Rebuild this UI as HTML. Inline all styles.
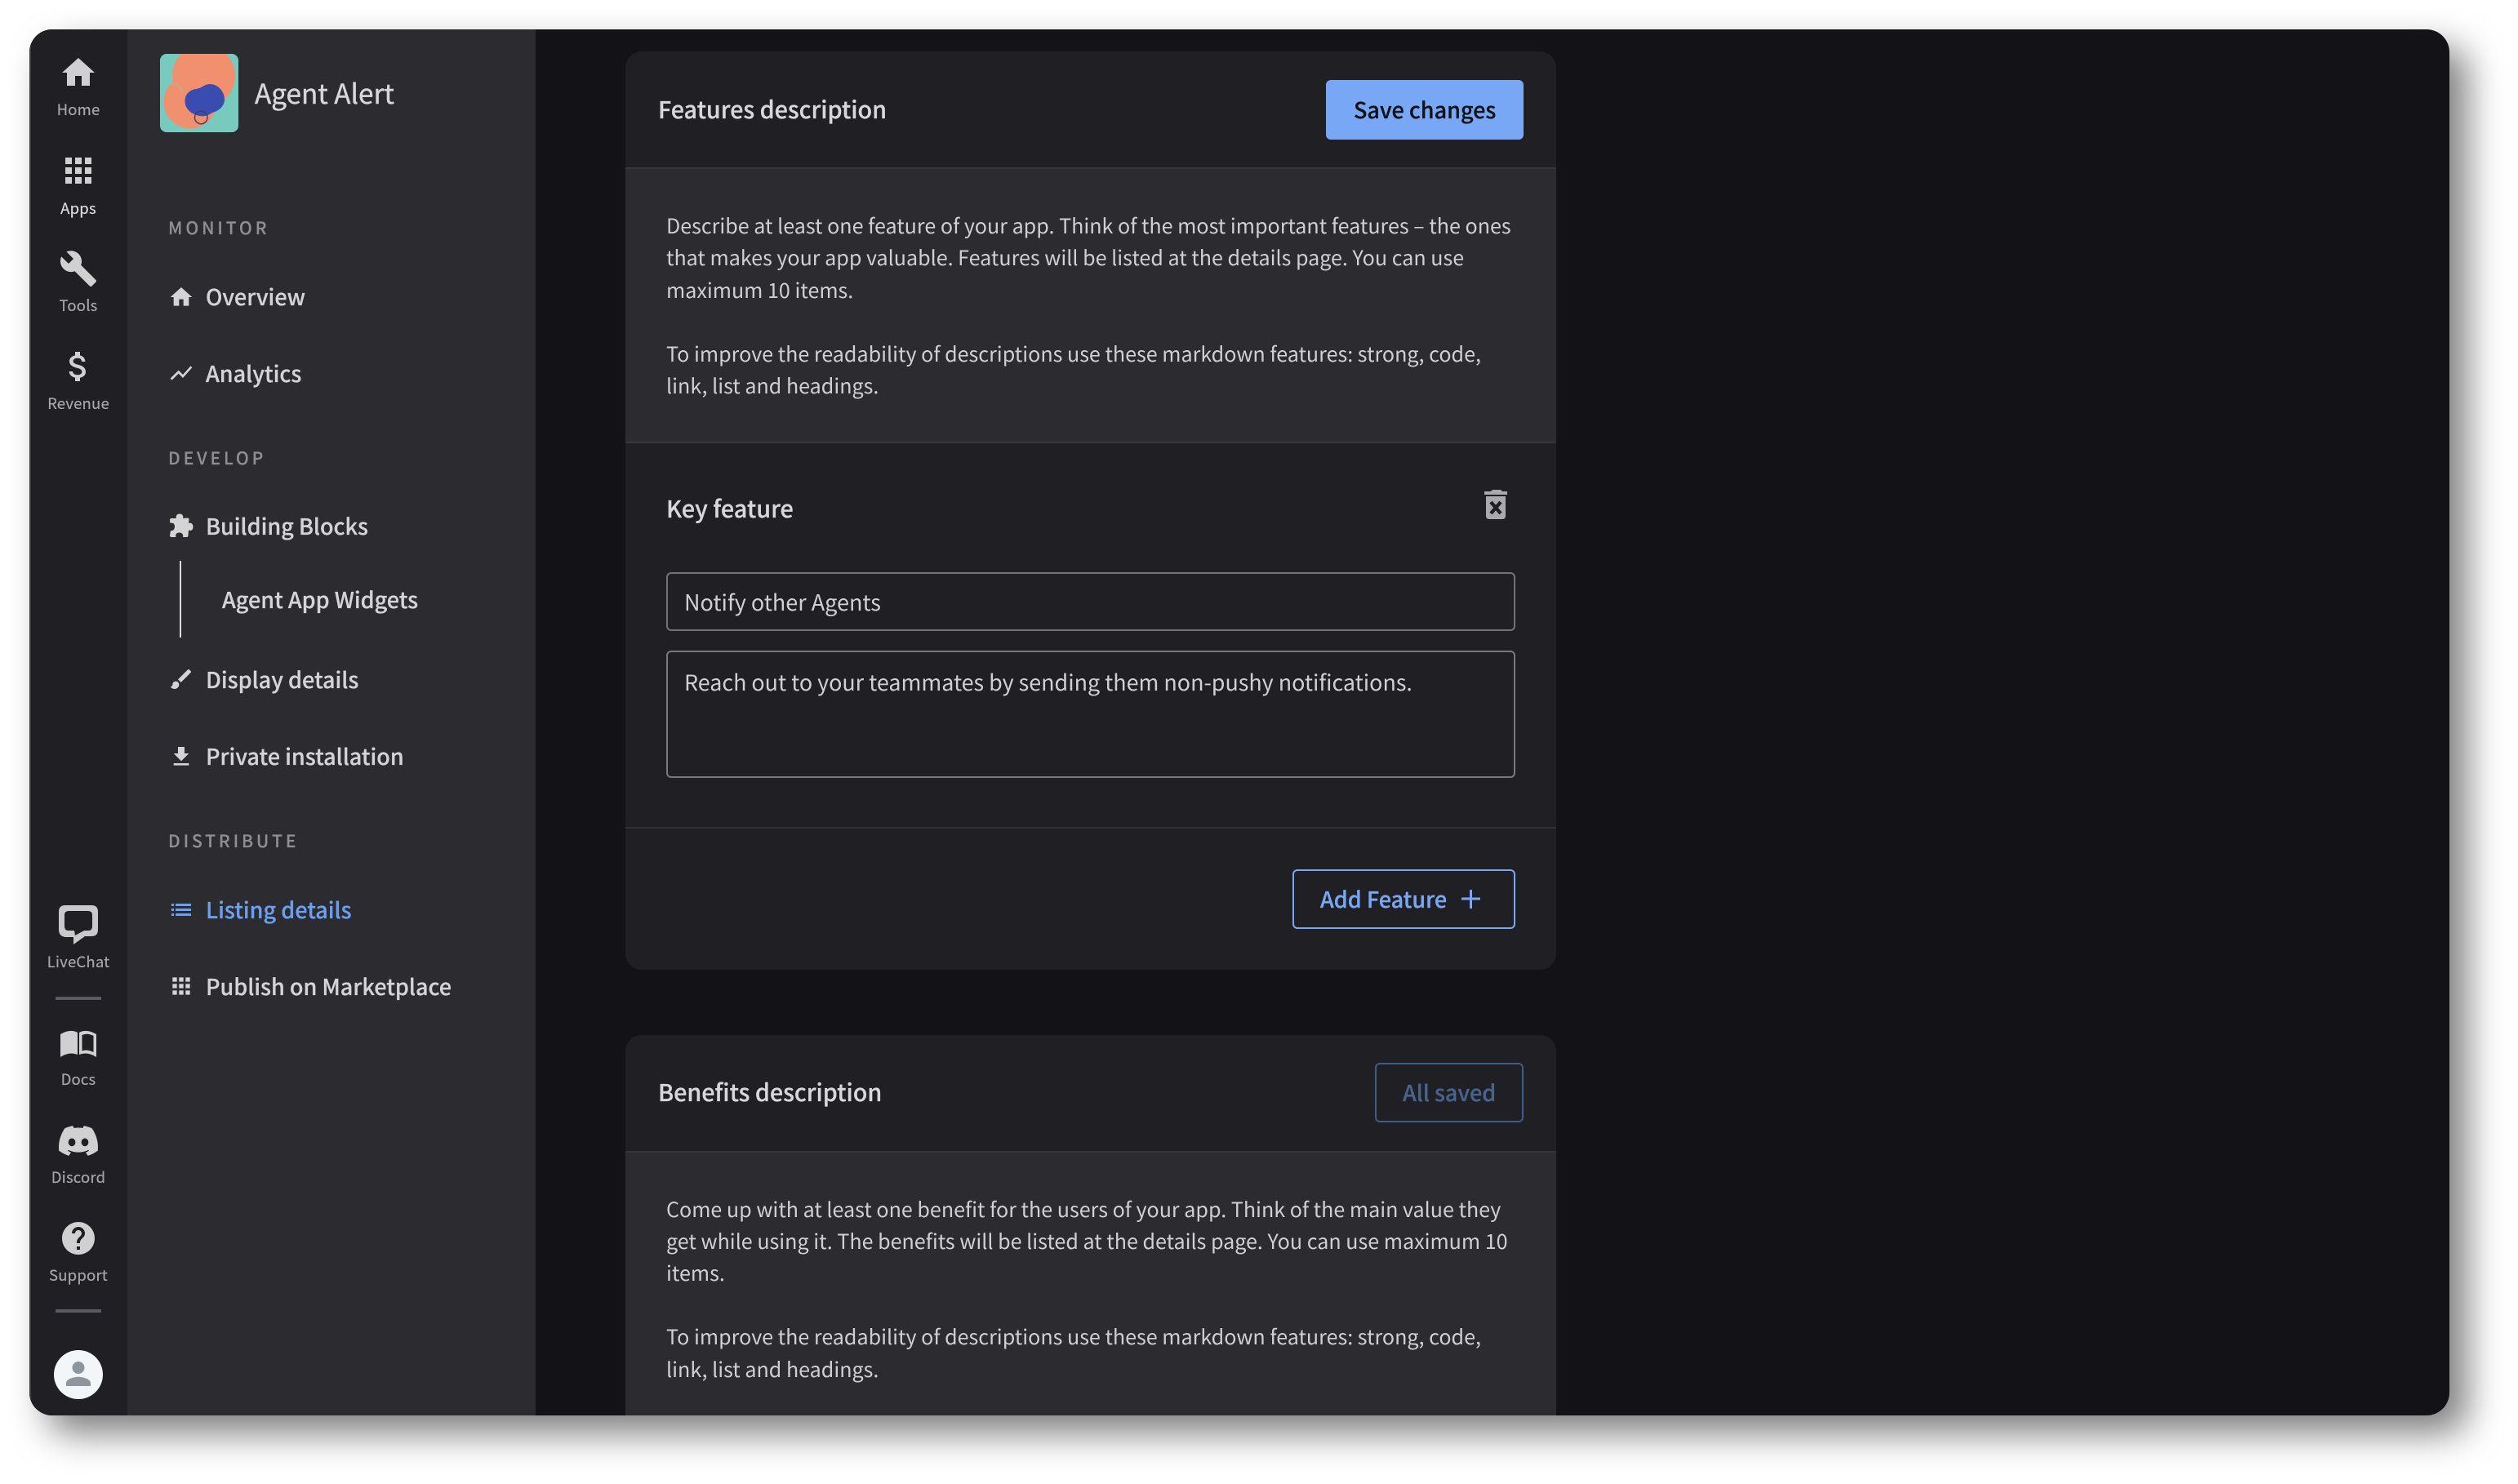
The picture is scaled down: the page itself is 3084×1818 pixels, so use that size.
<!DOCTYPE html>
<html><head><meta charset="utf-8"><style>
html,body{margin:0;padding:0;background:#fff;width:3084px;height:1818px;overflow:hidden}
body{font-family:"Noto Sans CJK JP","Liberation Sans",sans-serif;position:relative}
.w{position:absolute;left:36px;top:36px;width:2964px;height:1698px;background:#131317;border-radius:28px;box-shadow:22px 22px 44px rgba(0,0,0,.5);overflow:hidden}
.a{position:absolute}
.t{position:absolute;white-space:nowrap;line-height:40px;height:40px;color:#d4d4d6}
.r{font-size:18.5px;color:#a6a6a9;width:120px;left:36px;text-align:center;letter-spacing:.2px;-webkit-text-stroke:.2px}
.s{font-size:21px;color:#8f8f93;letter-spacing:3.9px;left:206px;font-weight:500;-webkit-text-stroke:.2px}
.n{font-size:27px;left:252px;color:#d4d4d6;font-weight:500;-webkit-text-stroke:.25px}
.b{font-size:25.080px;left:816px;color:#d0d0d2}
.h{font-size:28.700px;left:806px;color:#d8d8da;font-weight:500;-webkit-text-stroke:.25px}
.k{font-size:27px;font-weight:500;-webkit-text-stroke:.25px}
</style></head><body>
<div class="w">
 <div class="a" style="left:0;top:0;width:120px;height:1698px;background:#202024;box-shadow:inset 2px 0 0 #3c3c40"></div>
 <div class="a" style="left:120px;top:0;width:500px;height:1698px;background:#2b2b30"></div>
 <div class="a" style="left:730px;top:27px;width:1140px;height:1125px;background:#202024;border-radius:20px;overflow:hidden">
  <div class="a" style="left:0;top:142px;width:1140px;height:334px;background:#2b2b30;border-top:2px solid #37373b;border-bottom:2px solid #37373b"></div>
  <div class="a" style="left:0;top:950px;width:1140px;height:2px;background:#333337"></div>
 </div>
 <div class="a" style="left:730px;top:1232px;width:1140px;height:500px;background:#202024;border-radius:20px;overflow:hidden">
  <div class="a" style="left:0;top:142px;width:1140px;height:400px;background:#2b2b30;border-top:2px solid #37373b"></div>
 </div>
 <div class="a" style="left:1588px;top:62px;width:242px;height:73px;background:#78a8f5;border-radius:6px"></div>
 <div class="a" style="left:780px;top:665px;width:1036px;height:68px;border:2px solid #737376;border-radius:6px"></div>
 <div class="a" style="left:780px;top:761px;width:1036px;height:152px;border:2px solid #79797c;border-radius:6px"></div>
 <div class="a" style="left:1547px;top:1029px;width:269px;height:69px;border:2px solid #78a8f5;border-radius:6px"></div>
 <div class="a" style="left:1648px;top:1266px;width:178px;height:69px;border:2px solid #3f5c87;border-radius:6px"></div>
 <div class="a" style="left:32px;top:1185px;width:56px;height:4px;background:#5c5a60"></div>
 <div class="a" style="left:32px;top:1568px;width:56px;height:4px;background:#5c5a60"></div>
 <div class="a" style="left:30px;top:1618px;width:60px;height:60px;border-radius:50%;background:#f3f6f9"></div>
 <div class="a" style="left:184px;top:651px;width:2px;height:94px;background:#dcdcde"></div>
</div>

<svg class="a" style="left:0;top:0" width="3084" height="1818" viewBox="0 0 3084 1818" xmlns="http://www.w3.org/2000/svg">
 <defs><clipPath id="lc"><rect x="196" y="66" width="96" height="96" rx="8"/></clipPath></defs>
 <g fill="#d0d0d2">
  <path transform="translate(72 65) scale(2)" d="M10 20v-6h4v6h5v-8h3L12 3 2 12h3v8z"/>
  <path transform="translate(72 185) scale(2)" d="M4 8h4V4H4v4zm6 12h4v-4h-4v4zm-6 0h4v-4H4v4zm0-6h4v-4H4v4zm6 0h4v-4h-4v4zm6-10v4h4V4h-4zm-6 4h4V4h-4v4zm6 6h4v-4h-4v4zm0 6h4v-4h-4v4z"/>
  <path transform="translate(72 305) scale(2)" d="M22.7 19l-9.1-9.1c.9-2.3.4-5-1.5-6.9-2-2-5-2.4-7.4-1.3L9 6 6 9 1.6 4.7C.4 7.1.9 10.1 2.9 12.1c1.9 1.9 4.6 2.4 6.9 1.5l9.1 9.1c.4.4 1 .4 1.4 0l2.3-2.3c.5-.4.5-1.1.1-1.4z"/>
  <path transform="translate(72 425) scale(2)" d="M11.8 10.9c-2.27-.59-3-1.2-3-2.15 0-1.09 1.01-1.85 2.7-1.85 1.78 0 2.44.85 2.5 2.1h2.21c-.07-1.72-1.12-3.3-3.21-3.81V3h-3v2.16c-1.94.42-3.5 1.68-3.5 3.61 0 2.31 1.91 3.46 4.7 4.13 2.5.6 3 1.48 3 2.41 0 .69-.49 1.79-2.7 1.79-2.06 0-2.87-.92-2.98-2.1h-2.2c.12 2.19 1.76 3.42 3.68 3.83V21h3v-2.15c1.95-.37 3.5-1.5 3.5-3.55 0-2.84-2.43-3.81-4.7-4.4z"/>
  <path fill="#c9c9cb" fill-rule="evenodd" d="M80 1109H112Q120 1109 120 1117V1139Q120 1147 112 1147H104L90 1157V1148H80Q72 1147 72 1139V1117Q72 1109 80 1109ZM84 1116Q79 1116 79 1121V1135Q79 1140 84 1140H91L92 1146L103 1140H108Q113 1140 113 1135V1121Q113 1116 108 1116Z"/>
  <path d="M74 1267Q86 1260 95 1265V1292Q85 1288 74 1295Z"/>
  <path d="M97 1265Q106 1260 118 1267V1295Q107 1288 97 1292Z" fill="#d0d0d2"/>
  <path d="M100.500 1268Q107 1265 114.500 1269V1289Q106 1285 100.500 1287.500Z" fill="#202024"/>
  <path transform="translate(72 1379) scale(.676)" d="M60.1045 4.8978C55.5792 2.8214 50.7265 1.2916 45.6527 0.41542C45.5603 0.39851 45.468 0.440769 45.4204 0.525289C44.7963 1.6353 44.105 3.0834 43.6209 4.2216C38.1637 3.4046 32.7345 3.4046 27.3892 4.2216C26.905 3.0581 26.1886 1.6353 25.5617 0.525289C25.5141 0.443589 25.4218 0.40133 25.3294 0.41542C20.2584 1.2888 15.4057 2.8186 10.8776 4.8978C10.8384 4.9147 10.8048 4.9429 10.7825 4.9795C1.57795 18.7309 -0.943561 32.1443 0.293408 45.3914C0.299005 45.4562 0.335386 45.5182 0.385761 45.5576C6.45866 50.0174 12.3413 52.7249 18.1147 54.5195C18.2071 54.5477 18.305 54.5139 18.3638 54.4378C19.7295 52.5728 20.9469 50.6063 21.9907 48.5383C22.0523 48.4172 21.9935 48.2735 21.8676 48.2256C19.9366 47.4931 18.0979 46.6 16.3292 45.5858C16.1893 45.5041 16.1781 45.304 16.3068 45.2082C16.679 44.9293 17.0513 44.6391 17.4067 44.3461C17.471 44.2926 17.5606 44.2813 17.6362 44.3151C29.2558 49.6202 41.8354 49.6202 53.3179 44.3151C53.3935 44.2785 53.4831 44.2898 53.5502 44.3433C53.9057 44.6363 54.2779 44.9293 54.6529 45.2082C54.7816 45.304 54.7732 45.5041 54.6333 45.5858C52.8646 46.6197 51.0259 47.4931 49.0921 48.2228C48.9662 48.2707 48.9102 48.4172 48.9718 48.5383C50.038 50.6034 51.2554 52.5699 52.5959 54.435C52.6519 54.5139 52.7526 54.5477 52.845 54.5195C58.6464 52.7249 64.529 50.0174 70.6019 45.5576C70.6551 45.5182 70.6887 45.459 70.6943 45.3942C72.1747 30.0791 68.2147 16.7757 60.1968 4.9823C60.1772 4.9429 60.1437 4.9147 60.1045 4.8978ZM23.7259 37.3253C20.2276 37.3253 17.3451 34.1136 17.3451 30.1693C17.3451 26.225 20.1717 23.0133 23.7259 23.0133C27.308 23.0133 30.1626 26.2532 30.1066 30.1693C30.1066 34.1136 27.28 37.3253 23.7259 37.3253ZM47.3178 37.3253C43.8196 37.3253 40.9371 34.1136 40.9371 30.1693C40.9371 26.225 43.7636 23.0133 47.3178 23.0133C50.9 23.0133 53.7545 26.2532 53.6986 30.1693C53.6986 34.1136 50.9 37.3253 47.3178 37.3253Z"/>
  <path transform="translate(72 1493) scale(2)" d="M12 2C6.48 2 2 6.48 2 12s4.48 10 10 10 10-4.48 10-10S17.52 2 12 2zm1 17h-2v-2h2v2zm2.07-7.75l-.9.92C13.45 12.9 13 13.5 13 15h-2v-.5c0-1.1.45-2.1 1.17-2.83l1.24-1.26c.37-.36.59-.86.59-1.41 0-1.1-.9-2-2-2s-2 .9-2 2H8c0-2.21 1.79-4 4-4s4 1.79 4 4c0 .88-.36 1.68-.93 2.25z"/>
 </g>
 <path transform="translate(73.5 1660.5) scale(1.875)" fill="#8d969c" d="M12 12c2.21 0 4-1.79 4-4s-1.79-4-4-4-4 1.79-4 4 1.79 4 4 4zm0 2c-2.67 0-8 1.34-8 4v2h16v-2c0-2.66-5.33-4-8-4z"/>
 <g clip-path="url(#lc)">
  <rect x="196" y="66" width="96" height="96" fill="#78cabe"/>
  <circle cx="249.5" cy="93" r="38.5" fill="#f0906e"/>
  <circle cx="233" cy="125" r="32.5" fill="#f0906e"/>
  <path d="M240 109C248 108 250 103 257 103C267 103 275 112 275 122C275 130 268 136 260 138C252 144 243 143 236 139C229 135 226.500 129 226.500 124C226.500 116 232 110 240 109Z" fill="#3b4cb0"/>
  <circle cx="246.300" cy="144" r="7.800" fill="none" stroke="#3d3f6b" stroke-width="1.400"/>
  <path d="M210 103h5q3 0 4 3l3 4 3 2" fill="none" stroke="#a9b79c" stroke-width="1.200"/>
 </g>
 <g fill="#d4d4d6">
  <path transform="translate(206 348) scale(1.333)" d="M10 20v-6h4v6h5v-8h3L12 3 2 12h3v8z"/>
  <path transform="translate(206 441) scale(1.333)" d="M3.500 18.490l6-6.010 4 4L22 6.920l-1.410-1.410-7.090 7.970-4-4L2 16.990z"/>
  <path transform="translate(200 620)" d="M16 15C15 13 16 9.500 20 9.500C24 9.500 25 13 24 15L29.500 14.500Q31.500 14.500 31.500 16.500L31 21C33 20 36.500 21 36.500 25.500C36.500 30 33 30.500 31 29.500L30.500 36Q30.500 38 28.500 38L24 38C25 35 23 32.500 19.500 32.500C16 32.500 14.500 35 15.500 38L10 38Q8 38 8 36L9 30C11 31 14 29 14 25C14 21 11 20 8.500 21L8 17Q8 15 10 15Z"/>
  <path transform="translate(206 816) scale(1.333)" d="M7 14c-1.660 0-3 1.340-3 3 0 1.310-1.160 2-2 2 .92 1.220 2.490 2 4 2 2.210 0 4-1.790 4-4 0-1.660-1.340-3-3-3zm13.710-9.370l-1.340-1.340c-.39-.39-1.020-.39-1.410 0L9 12.250 11.750 15l8.960-8.960c.39-.39.39-1.030 0-1.410z"/>
  <path transform="translate(206 911) scale(1.333)" d="M19 9h-4V3H9v6H5l7 7 7-7zM5 18v2h14v-2H5z"/>
  <path transform="translate(206 1192) scale(1.333)" d="M4 8h4V4H4v4zm6 12h4v-4h-4v4zm-6 0h4v-4H4v4zm0-6h4v-4H4v4zm6 0h4v-4h-4v4zm6-10v4h4V4h-4zm-6 4h4V4h-4v4zm6 6h4v-4h-4v4zm0 6h4v-4h-4v4z"/>
 </g>
 <g fill="#6b9ff0">
  <rect x="210" y="1107" width="3" height="3"/><rect x="210" y="1113" width="3" height="3"/><rect x="210" y="1119" width="3" height="3"/>
  <rect x="215" y="1107" width="19" height="3"/><rect x="215" y="1113" width="19" height="3"/><rect x="215" y="1119" width="19" height="3"/>
 </g>
 <g fill="#aaaaae">
  <path d="M1828 600H1838L1840 602H1846V606H1818V602H1826Z"/>
  <path d="M1820 608H1844V632Q1844 636 1840 636H1824Q1820 636 1820 632Z"/>
 </g>
 <path d="M1826 615L1838 629M1838 615L1826 629" stroke="#202024" stroke-width="4.400" fill="none"/>
 <path d="M1790 1101H1813M1801.500 1090V1113" stroke="#78a8f5" stroke-width="3" fill="none"/>
</svg>

<div class="t r" style="top:114px">Home</div>
<div class="t r" style="top:235px;color:#dcdcde">Apps</div>
<div class="t r" style="top:354px">Tools</div>
<div class="t r" style="top:474px">Revenue</div>
<div class="t r" style="top:1158px">LiveChat</div>
<div class="t r" style="top:1302px">Docs</div>
<div class="t r" style="top:1422px">Discord</div>
<div class="t r" style="top:1542px">Support</div>

<div class="t" style="left:312px;top:93px;font-size:33.300px;color:#d8d8da;-webkit-text-stroke:.4px">Agent Alert</div>
<div class="t s" style="top:259px">MONITOR</div>
<div class="t s" style="top:541px">DEVELOP</div>
<div class="t s" style="top:1010px">DISTRIBUTE</div>
<div class="t n" style="top:343px">Overview</div>
<div class="t n" style="top:437px">Analytics</div>
<div class="t n" style="top:624px">Building Blocks</div>
<div class="t n" style="top:714px;left:272px">Agent App Widgets</div>
<div class="t n" style="top:812px">Display details</div>
<div class="t n" style="top:906px">Private installation</div>
<div class="t n" style="top:1094px;color:#6b9ff0">Listing details</div>
<div class="t n" style="top:1188px">Publish on Marketplace</div>

<div class="t h" style="top:114px">Features description</div>
<div class="t k" style="left:1658px;top:114px;color:#131317">Save changes</div>
<div class="t b" style="top:256px">Describe at least one feature of your app. Think of the most important features – the ones</div>
<div class="t b" style="top:295px">that makes your app valuable. Features will be listed at the details page. You can use</div>
<div class="t b" style="top:335px">maximum 10 items.</div>
<div class="t b" style="top:413px">To improve the readability of descriptions use these markdown features: strong, code,</div>
<div class="t b" style="top:452px">link, list and headings.</div>
<div class="t" style="left:816px;top:603px;font-size:28.800px;font-weight:500;color:#d8d8da;-webkit-text-stroke:.25px">Key feature</div>
<div class="t" style="left:838px;top:717px;font-size:27px;color:#d0d0d2">Notify other Agents</div>
<div class="t" style="left:838px;top:815px;font-size:26.880px;color:#d0d0d2">Reach out to your teammates by sending them non-pushy notifications.</div>
<div class="t k" style="left:1617px;top:1081px;color:#78a8f5">Add Feature</div>
<div class="t h" style="top:1318px">Benefits description</div>
<div class="t k" style="left:1718px;top:1318px;color:#48638c">All saved</div>
<div class="t b" style="top:1461px">Come up with at least one benefit for the users of your app. Think of the main value they</div>
<div class="t b" style="top:1500px">get while using it. The benefits will be listed at the details page. You can use maximum 10</div>
<div class="t b" style="top:1539px">items.</div>
<div class="t b" style="top:1617px">To improve the readability of descriptions use these markdown features: strong, code,</div>
<div class="t b" style="top:1657px">link, list and headings.</div>
</body></html>
